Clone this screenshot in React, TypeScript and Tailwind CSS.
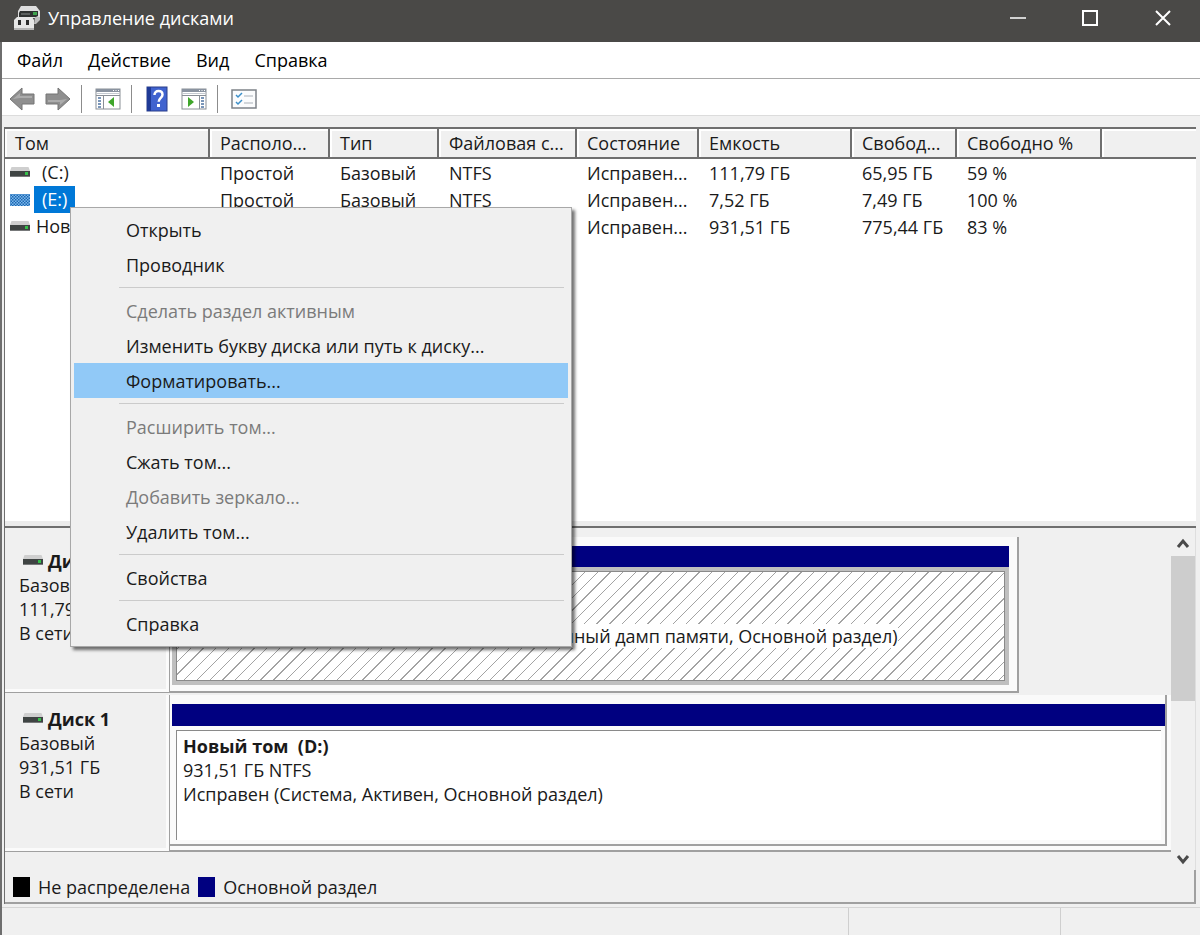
import { useId, type ReactNode } from "react";
import { clsx } from "clsx";

// Table columns
const columns = [
  { title: "Том", width: "w-[205px]" },
  { title: "Располо...", width: "w-[120px]" },
  { title: "Тип", width: "w-[109px]" },
  { title: "Файловая с...", width: "w-[138px]" },
  { title: "Состояние", width: "w-[122px]" },
  { title: "Емкость", width: "w-[153px]" },
  { title: "Свобод...", width: "w-[105px]" },
  { title: "Свободно %", width: "w-[145px]" },
];

// Volumes shown in the upper list
const volumes = [
  { name: "(C:)", cells: ["Простой", "Базовый", "NTFS", "Исправен...", "111,79 ГБ", "65,95 ГБ", "59 %"] },
  { name: "(E:)", selected: true, cells: ["Простой", "Базовый", "NTFS", "Исправен...", "7,52 ГБ", "7,49 ГБ", "100 %"] },
  { name: "Новый том", cells: ["Простой", "Базовый", "NTFS", "Исправен...", "931,51 ГБ", "775,44 ГБ", "83 %"] },
];

// Context menu, one array per group
const menuGroups = [
  [{ label: "Открыть" }, { label: "Проводник" }],
  [
    { label: "Сделать раздел активным", disabled: true },
    { label: "Изменить букву диска или путь к диску..." },
    { label: "Форматировать...", active: true },
  ],
  [
    { label: "Расширить том...", disabled: true },
    { label: "Сжать том..." },
    { label: "Добавить зеркало...", disabled: true },
    { label: "Удалить том..." },
  ],
  [{ label: "Свойства" }],
  [{ label: "Справка" }],
];

function DriveIcon({ selected }: { selected?: boolean }) {
  const id = useId();
  return (
    <svg width="22" height="14" viewBox="0 0 22 14" className="shrink-0" aria-hidden="true">
      <defs>
        <pattern id={id} width="3" height="3" patternUnits="userSpaceOnUse">
          <rect width="3" height="3" fill="#7db8ea" />
          <rect width="1.5" height="1.5" fill="#1a66b3" />
          <rect x="1.5" y="1.5" width="1.5" height="1.5" fill="#1a66b3" />
        </pattern>
      </defs>
      {selected ? (
        <path d="M1 1h20v12H1z" fill={`url(#${id})`} />
      ) : (
        <>
          <path d="M2.500 1h17L21 5H1z" fill="#cfcfcf" />
          <rect x="1" y="5" width="20" height="6" fill="#3f4443" />
          <rect x="1" y="10" width="20" height="1" fill="#77797a" />
          <rect x="16" y="6" width="3" height="3" fill="#35c04a" />
        </>
      )}
    </svg>
  );
}

function AppIcon() {
  return (
    <svg width="28" height="26" viewBox="0 0 28 26" aria-hidden="true">
      <path d="M8 1h15l4 5v7H5V6z" fill="#dedede" />
      <path d="M7 6h18v5l-2 1H6V8z" fill="#2f3231" />
      <rect x="8" y="8" width="9" height="2" fill="#5b5f5e" />
      <rect x="20" y="7" width="4" height="3" fill="#3fa34d" />
      <path d="M22 12h5v3l-4 4h-2z" fill="#bdbdbd" />
      <path d="M4 12h15l2 3v10H1V15z" fill="#e6e6e6" />
      <rect x="5" y="15" width="3" height="5" fill="#2b2b2b" />
      <rect x="13" y="15" width="3" height="5" fill="#2b2b2b" />
      <rect x="1" y="23" width="20" height="2" fill="#b5b5b5" />
    </svg>
  );
}

function ArrowIcon({ flip }: { flip?: boolean }) {
  return (
    <svg width="26" height="24" viewBox="0 0 26 24" className={clsx(flip && "rotate-180")} aria-hidden="true">
      <path d="M1 12 13 1v6h12v10H13v6z" fill="#8f8f8f" stroke="#757575" />
      <path d="M4 12 11 6v3h12v2H11" fill="#acacac" />
    </svg>
  );
}

function PanelIcon({ right }: { right?: boolean }) {
  const lines = right ? 20 : 3;
  return (
    <svg width="26" height="22" viewBox="0 0 26 22" aria-hidden="true">
      <rect x="1" y="1" width="24" height="20" fill="#fff" stroke="#8a8f96" />
      <rect x="1" y="1" width="24" height="3" fill="#8a93a0" />
      <path d="M18 2.500h1M20.500 2.500h1M23 2.500h1" stroke="#fff" />
      <rect x="2" y="5" width="22" height="1" fill="#c5cad1" />
      <path d="M1 7.500h24" stroke="#8a8f96" />
      <path d={right ? "M18.500 7v14" : "M8.500 7v14"} stroke="#8a8f96" />
      <path d={`M${lines} 10h4M${lines} 13h4M${lines} 16h4M${lines} 19h4`} stroke="#4f74a3" strokeWidth="1.500" strokeDasharray="3 1" />
      <path d={right ? "M7 9v10l6-5z" : "M19 9v10l-6-5z"} fill="#3fa62b" />
    </svg>
  );
}

function HelpIcon() {
  return (
    <svg width="22" height="26" viewBox="0 0 22 26" aria-hidden="true">
      <rect x="1" y="1" width="20" height="24" fill="#4063cf" stroke="#2b3f8a" />
      <rect x="1" y="1" width="4" height="24" fill="#1f3a96" />
      <path
        d="M8.500 9c0-2.600 1.600-4 4-4s4 1.400 4 3.700c0 3-3.800 3.300-3.800 7"
        fill="none"
        stroke="#fff"
        strokeWidth="2.500"
      />
      <rect x="11" y="18" width="3" height="3" fill="#fff" />
    </svg>
  );
}

function ChecklistIcon() {
  return (
    <svg width="26" height="20" viewBox="0 0 26 20" aria-hidden="true">
      <rect x="1" y="1" width="24" height="18" fill="#fbfcfd" stroke="#7d8288" strokeWidth="1.500" />
      <path d="m5 6 2 2 4-4M5 13l2 2 4-4" fill="none" stroke="#3c8fc9" strokeWidth="1.500" />
      <path d="M13 7h9M13 14h9" stroke="#a9b0b8" />
    </svg>
  );
}

function ToolButton({ label, children }: { label: string; children: ReactNode }) {
  return (
    <button type="button" aria-label={label} className="flex h-7 w-7 items-center justify-center">
      {children}
    </button>
  );
}

function ToolDivider() {
  return <div className="h-7 w-px bg-[#8c8c8c]" />;
}

function DiskLabel({ title, size }: { title: string; size: string }) {
  return (
    <div className="w-[165px] shrink-0 border-r border-b border-[#a0a0a0] pt-3 pl-[14px] shadow-[inset_-3px_-3px_0_#fbfbfb]">
      <div className="flex items-center pl-[3px]">
        <DriveIcon />
        <h2 className="pl-1 font-bold leading-6">{title}</h2>
      </div>
      <p>Базовый</p>
      <p>{size}</p>
      <p>В сети</p>
    </div>
  );
}

function Legend({ color, label }: { color: string; label: string }) {
  return (
    <div className="flex items-center gap-2">
      <span className={clsx("h-5 w-[17px]", color)} />
      {label}
    </div>
  );
}

function ContextMenu() {
  return (
    <div
      role="menu"
      className="absolute top-[207px] left-[68px] w-[502px] border border-[#a8a8a8] bg-[#f0f0f0] px-[3px] pt-1 pb-[5px] shadow-[3px_3px_3px_rgba(0,0,0,0.55)]"
    >
      {menuGroups.map((group, index) => (
        <div key={index}>
          {index > 0 && <div className="my-[5px] mr-1 ml-[45px] h-px bg-[#cbcbcb]" />}
          {group.map((item) => (
            <button
              key={item.label}
              type="button"
              role="menuitem"
              disabled={item.disabled}
              className={clsx(
                "block h-[35px] w-full pl-[52px] text-left",
                item.disabled && "text-[#7b7b7b]",
                item.active && "bg-[#91c9f7]"
              )}
            >
              {item.label}
            </button>
          ))}
        </div>
      ))}
    </div>
  );
}

export default function App() {
  return (
    <div className="relative flex min-h-screen flex-col border-l-2 border-[#6e6e6e] bg-[#f0f0f0] font-['Open_Sans','Noto_Sans',sans-serif] text-[18px] leading-6 text-[#1a1a1a]">
      {/* Title bar */}
      <header className="-ml-[2px] flex h-[42px] items-center bg-[#4a4947] pb-[6px] text-white">
        <div className="flex flex-1 items-center gap-[7px] pl-[13px]">
          <AppIcon />
          <h1>Управление дисками</h1>
        </div>
        <button type="button" aria-label="Свернуть" className="flex w-[72px] justify-center">
          <svg width="18" height="18" viewBox="0 0 18 18" stroke="#fff" strokeWidth="1.500">
            <path d="M1 9h16" />
          </svg>
        </button>
        <button type="button" aria-label="Развернуть" className="flex w-[72px] justify-center">
          <svg width="18" height="18" viewBox="0 0 18 18" fill="none" stroke="#fff" strokeWidth="2">
            <path d="M2 2h14v14H2z" />
          </svg>
        </button>
        <button type="button" aria-label="Закрыть" className="flex w-[74px] justify-center">
          <svg width="18" height="18" viewBox="0 0 18 18" stroke="#fff" strokeWidth="2">
            <path d="m2 2 14 14M16 2 2 16" />
          </svg>
        </button>
      </header>

      <nav className="flex h-[37px] items-center gap-[25px] border-b border-[#a9a9a9] bg-white pl-[15px] text-black">
        <button type="button">Файл</button>
        <button type="button">Действие</button>
        <button type="button">Вид</button>
        <button type="button">Справка</button>
      </nav>

      {/* Toolbar */}
      <div className="flex h-[37px] items-center border-b border-[#dcdcdc] bg-white pt-1 pl-[6px]">
        <ToolButton label="Назад"><ArrowIcon /></ToolButton>
        <div className="w-2" />
        <ToolButton label="Вперед"><ArrowIcon flip /></ToolButton>
        <div className="w-[9px]" />
        <ToolDivider />
        <div className="w-3" />
        <ToolButton label="Дерево консоли"><PanelIcon /></ToolButton>
        <div className="w-[9px]" />
        <ToolDivider />
        <div className="w-[11px]" />
        <ToolButton label="Справка"><HelpIcon /></ToolButton>
        <div className="w-[9px]" />
        <ToolButton label="Панель действий"><PanelIcon right /></ToolButton>
        <div className="w-[9px]" />
        <ToolDivider />
        <div className="w-3" />
        <ToolButton label="Свойства"><ChecklistIcon /></ToolButton>
      </div>

      {/* Volume list */}
      <main className="mt-[11px] mr-1 ml-[2px] flex flex-1 flex-col border-l border-[#6f6f6f]">
        <section className="flex-1 border-t-2 border-b-2 border-[#6f6f6f] bg-white shadow-[inset_0_-5px_0_#ececec]">
          <table className="w-full table-fixed border-separate border-spacing-0 text-left">
            <thead>
              <tr className="h-[30px] bg-[#f0f0f0]">
                {columns.map((column) => (
                  <th
                    key={column.title}
                    className={clsx(
                      "border-r-2 border-b-2 border-[#6f6f6f] p-0 pl-[10px] font-normal whitespace-nowrap shadow-[inset_2px_2px_0_#fff]",
                      column.width
                    )}
                  >
                    {column.title}
                  </th>
                ))}
                <th className="border-b-2 border-[#6f6f6f] shadow-[inset_2px_2px_0_#fff]" />
              </tr>
            </thead>
            <tbody>
              {volumes.map((volume) => (
                <tr key={volume.name} className="h-[27px]">
                  <td className="p-0 pl-1">
                    <div className="flex h-[27px] items-center gap-[3px]">
                      <DriveIcon selected={volume.selected} />
                      <span
                        className={clsx(
                          "leading-[27px] whitespace-nowrap",
                          volume.name.startsWith("(") ? "px-2" : "px-[2px]",
                          volume.selected && "bg-[#0078d7] text-white"
                        )}
                      >
                        {volume.name}
                      </span>
                    </div>
                  </td>
                  {volume.cells.map((cell, index) => (
                    <td key={index} className="p-0 pl-[10px] whitespace-nowrap">{cell}</td>
                  ))}
                  <td />
                </tr>
              ))}
            </tbody>
          </table>
        </section>

        {/* Disk map */}
        <section className="flex border-r border-[#dedede]">
          <div className="min-w-0 flex-1 pt-[9px] pb-[18px]">
            <div className="flex h-[156px]">
              <DiskLabel title="Диск 0" size="111,79 ГБ" />
              <div className="flex w-[849px] flex-col border-r-2 border-b-2 border-[#a0a0a0] bg-[#fafafa] pt-[9px] pr-2 pb-[6px] pl-[2px]">
                <div className="h-[21px] bg-[#000080]" />
                <div className="flex-1 border-4 border-[#bfbfbf] bg-white">
                  <div className="h-full border border-[#8a8a8a] bg-[repeating-linear-gradient(135deg,#a3a3a3_0,#a3a3a3_1px,#ffffff_1px,#ffffff_9px)] pl-[6px] whitespace-nowrap">
                    <p className="pt-1"><b className="bg-white">(C:)</b></p>
                    <p><span className="bg-white">111,79 ГБ NTFS</span></p>
                    <p><span className="bg-white">Исправен (Загрузка, Файл подкачки, Аварийный дамп памяти, Основной раздел)</span></p>
                  </div>
                </div>
              </div>
            </div>
            <div className="mt-[2px] flex h-[157px]">
              <DiskLabel title="Диск 1" size="931,51 ГБ" />
              <div className="flex min-w-0 flex-1 flex-col border-b-2 border-[#a0a0a0] bg-[#fafafa] pb-1">
                <div className="mr-1 flex flex-1 flex-col border-r-2 border-b-2 border-[#a0a0a0] pt-[9px] pl-[2px]">
                  <div className="h-[22px] bg-[#000080]" />
                  <div className="mt-1 mr-1 mb-1 ml-1 flex-1 border-t border-l border-[#8a8a8a] bg-white pt-[3px] pl-[6px] whitespace-nowrap">
                    <h3 className="font-bold whitespace-pre">Новый том  (D:)</h3>
                    <p>931,51 ГБ NTFS</p>
                    <p>Исправен (Система, Активен, Основной раздел)</p>
                  </div>
                </div>
              </div>
            </div>
          </div>
          {/* Scroll bar */}
          <div className="mt-1 flex w-6 shrink-0 flex-col">
            <button type="button" aria-label="Вверх" className="flex h-6 items-center justify-center">
              <svg width="14" height="14" viewBox="0 0 14 14" fill="none" stroke="#4a4a4a" strokeWidth="3">
                <path d="m2 10 5-6 5 6" />
              </svg>
            </button>
            <div className="h-[145px] bg-[#cdcdcd]" />
            <div className="flex-1" />
            <button type="button" aria-label="Вниз" className="flex h-6 items-center justify-center">
              <svg width="14" height="14" viewBox="0 0 14 14" fill="none" stroke="#4a4a4a" strokeWidth="3">
                <path d="m2 5 5 6 5-6" />
              </svg>
            </button>
          </div>
        </section>

        <div className="flex h-[34px] items-center gap-2 border-r-2 border-b-2 border-[#a0a0a0] pt-[2px] pl-2">
          <Legend color="bg-black" label="Не распределена" />
          <Legend color="bg-[#000080]" label="Основной раздел" />
        </div>
      </main>

      {/* Status bar */}
      <footer className="mt-[3px] flex h-7 border-t border-[#d5d5d5]">
        <div className="flex-1 border-r border-[#cfcfcf]" />
        <div className="w-[212px] border-r border-[#cfcfcf]" />
        <div className="w-[139px]" />
      </footer>

      <ContextMenu />
    </div>
  );
}
